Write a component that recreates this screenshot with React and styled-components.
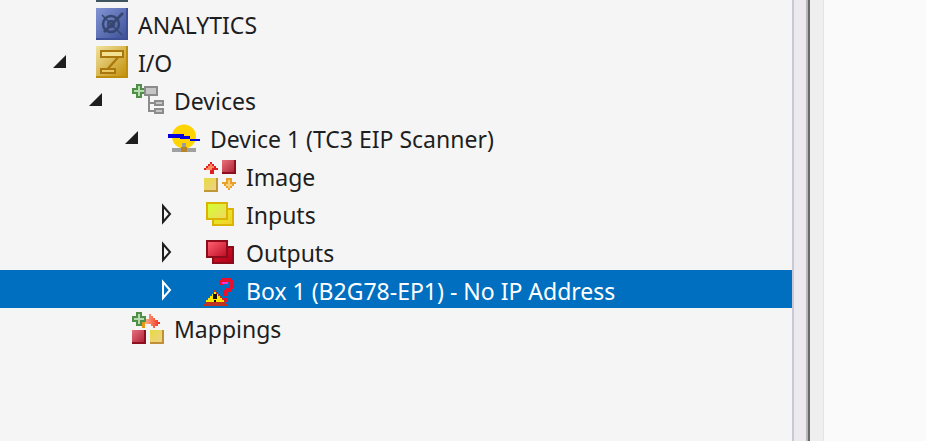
import React from "react";
import styled, { createGlobalStyle } from "styled-components";

const Global = createGlobalStyle`
  html, body { margin: 0; padding: 0; height: 100%; overflow: hidden; background: #f5f5f5; }
  #root { height: 100%; }
`;

const Page = styled.div`
  display: flex;
  width: 926px;
  height: 441px;
  overflow: hidden;
  background: #f5f5f5;
  font-family: "Noto Sans", "Open Sans", sans-serif;
`;
const TreePane = styled.div`
  width: 792px;
  flex: none;
  margin-top: -34px;
  display: flex;
  flex-direction: column;
`;
const Row = styled.div`
  display: flex;
  align-items: center;
  flex: none;
  height: 38px;
  padding-left: ${(p) => 52 + p.$level * 36}px;
  background: ${(p) => (p.$selected ? "#006fc0" : "transparent")};
  color: ${(p) => (p.$selected ? "#ffffff" : "#1e1e1e")};
`;
const ExpanderSlot = styled.div`
  width: 44px;
  height: 38px;
  flex: none;
  display: flex;
  color: ${(p) => (p.$selected ? "#ffffff" : "#1e1e1e")};
`;
const IconSvg = styled.svg`
  width: 32px;
  height: 32px;
  margin-top: 2px;
  flex: none;
  shape-rendering: crispEdges;
  display: block;
`;
const Label = styled.span`
  margin-left: 10px;
  padding-top: 4px;
  font-size: 23px;
  line-height: 34px;
  white-space: nowrap;
`;
const ScrollEdge = styled.div`
  width: 2px;
  flex: none;
  background: #c9c9d8;
`;
const ScrollTrack = styled.div`
  width: 12px;
  flex: none;
  background: #ece9ef;
`;
const Splitter = styled.div`
  width: 4px;
  flex: none;
  background: linear-gradient(90deg, #b8b8b8 0 50%, #6a6a6a 50% 100%);
`;
const Gutter = styled.div`
  width: 13px;
  flex: none;
  background: #efefef;
  border-right: 1px solid #e4e4e4;
`;
const Content = styled.div`
  flex: 1;
  background: #fafafa;
`;

const Filled = () => (
  <svg width="44" height="38" style={{ display: "block" }}>
    <polygon points="1,26 14,26 14,13" fill="currentColor" />
  </svg>
);
const Open = () => (
  <svg width="44" height="38" style={{ display: "block" }}>
    <polygon points="3,12 10,20 3,28" fill="none" stroke="currentColor" strokeWidth="2" />
  </svg>
);

const Grad = ({ id, a, b, x2 = 1, y2 = 1 }) => (
  <linearGradient id={id} x1="0" y1="0" x2={x2} y2={y2}>
    <stop offset="0" stopColor={a} />
    <stop offset="1" stopColor={b} />
  </linearGradient>
);

const Square = ({ x, y, fill, edge, size = 14 }) => (
  <>
    <rect x={x} y={y} width={size} height={size} fill={edge} />
    <rect x={x} y={y} width={size - 2} height={size - 2} fill={fill} />
  </>
);

const Defs = () => (
  <svg width="0" height="0" style={{ position: "absolute" }}>
    <defs>
      <Grad id="blue" a="#8395d4" b="#3c5198" />
      <Grad id="gold" a="#f0e2a0" b="#c4920c" />
      <Grad id="redS" a="#e8707c" b="#b0273a" />
      <Grad id="yelS" a="#e6dc40" b="#efd088" />
      <Grad id="yelF" a="#d4ff30" b="#f0d860" />
      <Grad id="redF" a="#ff5f70" b="#c01028" />
      <Grad id="redB" a="#d81830" b="#b00018" />
      <Grad id="yelB" a="#e4f020" b="#f0d030" />
      <Grad id="arrow" a="#ffb088" b="#f03020" y2={0} />
    </defs>
  </svg>
);

const Analytics = () => (
  <IconSvg viewBox="0 0 32 32">
    <rect width="32" height="32" fill="#3c4f96" />
    <rect width="30" height="30" fill="url(#blue)" />
    <g shapeRendering="auto" fill="none" stroke="#36466f">
      <circle cx="15" cy="16" r="8" strokeWidth="2.4" />
      <circle cx="15" cy="16" r="3" strokeWidth="2" />
      <path d="M6 7 L26 27" strokeWidth="1.6" />
      <path d="M27 5 L8 24" strokeWidth="2.6" />
    </g>
  </IconSvg>
);

const IO = () => (
  <IconSvg viewBox="0 0 32 32">
    <rect width="32" height="32" fill="#bd8d0c" />
    <rect width="30" height="30" fill="url(#gold)" />
    <rect x="4" y="4" width="24" height="8" fill="#a9770e" />
    <rect x="6" y="6" width="20" height="4" fill="#f1e190" />
    <rect x="4" y="22" width="16" height="6" fill="#a9770e" />
    <rect x="6" y="24" width="12" height="2" fill="#e8c860" />
    <path d="M20 12 L23 12 L14 22 L11 22 Z" fill="#a9770e" shapeRendering="auto" />
  </IconSvg>
);

const GreenPlus = ({ x = 0, y = 0 }) => (
  <g transform={`translate(${x} ${y})`}>
    <path d="M4 0h6v4h4v6h-4v4H4v-4H0V4h4z" fill="#4f8f48" />
    <path d="M6 2h2v4h4v2H8v4H6V8H2V6h4z" fill="#b4dcae" />
  </g>
);

const Devices = () => (
  <IconSvg viewBox="0 0 32 32">
    <GreenPlus />
    <rect x="12" y="2" width="14" height="10" fill="#8c8c8c" />
    <rect x="14" y="4" width="10" height="6" fill="#c6c6c6" />
    <rect x="16" y="12" width="2" height="16" fill="#8c8c8c" />
    <rect x="16" y="18" width="6" height="2" fill="#8c8c8c" />
    <rect x="16" y="26" width="6" height="2" fill="#8c8c8c" />
    <rect x="22" y="16" width="10" height="6" fill="#8c8c8c" />
    <rect x="24" y="18" width="6" height="2" fill="#c6c6c6" />
    <rect x="22" y="24" width="10" height="6" fill="#8c8c8c" />
    <rect x="24" y="26" width="6" height="2" fill="#c6c6c6" />
  </IconSvg>
);

const Device = () => (
  <IconSvg viewBox="0 0 32 32">
    <circle cx="16" cy="14.5" r="12" fill="#ffd400" shapeRendering="auto" />
    <rect x="14" y="21" width="4" height="5" fill="#9c9c9c" />
    <rect x="4" y="26" width="24" height="4" fill="#a0a0a0" />
    <rect x="13" y="25" width="6" height="5" fill="#b88428" />
    <rect x="0" y="12" width="16" height="4" fill="#0000e0" />
    <rect x="12" y="14" width="10" height="3" fill="#0000e0" />
    <rect x="22" y="17" width="10" height="2" fill="#0000e0" />
  </IconSvg>
);

const ImageIcon = () => (
  <IconSvg viewBox="0 0 32 32">
    <path d="M6 2h2v2h2v2h2v2h2v2H10v4H6v-4H0V8h2V6h2V4h2z" fill="#e02020" />
    <path d="M6 4h2v2h2v2H4V6h2zM2 8h6v2H2z" fill="#ff8a60" />
    <Square x={18} y={0} edge="#8c1020" fill="url(#redS)" />
    <Square x={0} y={18} edge="#c09838" fill="url(#yelS)" />
    <path d="M22 18h6v4h4v2h-2v2h-2v2h-2v2h-2v-2h-2v-2h-2v-2h-2v-2h4z" fill="#e8a028" />
    <path d="M24 20h2v4h2v2h-2v2h-2v-2h-2v-2h2z" fill="#f8d078" />
  </IconSvg>
);

const Stack = ({ edge, back, front }) => (
  <IconSvg viewBox="0 0 32 32">
    <rect x="8" y="10" width="22" height="18" fill={edge} />
    <rect x="10" y="12" width="18" height="14" fill={back} />
    <rect x="2" y="4" width="22" height="18" fill={edge} />
    <rect x="4" y="6" width="18" height="14" fill={front} />
  </IconSvg>
);

const Warn = () => (
  <IconSvg viewBox="0 0 32 32">
    <g fill="#e8102c">
      <rect x="17" y="4" width="10" height="2" />
      <rect x="15" y="6" width="14" height="2" />
      <rect x="15" y="8" width="4" height="3" />
      <rect x="26" y="7" width="4" height="8" />
      <rect x="22" y="14" width="5" height="4" />
      <rect x="19" y="16" width="4" height="6" />
      <rect x="19" y="24" width="4" height="4" />
    </g>
    <rect x="18" y="8" width="6" height="2" fill="#ff30d0" />
    <path d="M10 16h2v2h2v2h2v2h2v2h2v2h2v4h2v2H0v-2h2v-4h2v-2h2v-2h2v-2h2z" fill="#c03020" />
    <path d="M10 18h2v2h2v2h2v2h2v2h2v2H2v-2h2v-2h2v-2h2v-2h2z" fill="#ffe800" />
    <rect x="9" y="20" width="4" height="5" fill="#101010" />
    <rect x="10" y="26" width="2" height="2" fill="#101010" />
  </IconSvg>
);

const Mappings = () => (
  <IconSvg viewBox="0 0 32 32">
    <rect x="10" y="9" width="3" height="7" fill="#e89818" />
    <path d="M13 7h4V2h2v2h2v2h2v2h3v2h2v2h-2v2h-3v2h-2v-2h-2v-2h-6z" fill="url(#arrow)" />
    <GreenPlus />
    <Square x={0} y={18} edge="#8c1020" fill="url(#redS)" />
    <Square x={18} y={18} edge="#c09038" fill="url(#yelS)" />
  </IconSvg>
);

const rows = [
  { level: 0, icon: <IconSvg viewBox="0 0 32 32"><rect y="26" width="32" height="6" fill="#3f5660" /></IconSvg> },
  { level: 0, icon: <Analytics />, label: "ANALYTICS" },
  { level: 0, icon: <IO />, label: "I/O", exp: "filled" },
  { level: 1, icon: <Devices />, label: "Devices", exp: "filled" },
  { level: 2, icon: <Device />, label: "Device 1 (TC3 EIP Scanner)", exp: "filled" },
  { level: 3, icon: <ImageIcon />, label: "Image" },
  { level: 3, icon: <Stack edge="#dcb400" back="url(#yelB)" front="url(#yelF)" />, label: "Inputs", exp: "open" },
  { level: 3, icon: <Stack edge="#8c0c1c" back="url(#redB)" front="url(#redF)" />, label: "Outputs", exp: "open" },
  { level: 3, icon: <Warn />, label: "Box 1 (B2G78-EP1) - No IP Address", exp: "open", selected: true },
  { level: 1, icon: <Mappings />, label: "Mappings" },
];

export default function App() {
  return (
    <Page>
      <Global />
      <Defs />
      <TreePane>
        {rows.map((r, i) => (
          <Row key={i} $level={r.level} $selected={r.selected}>
            <ExpanderSlot $selected={r.selected}>
              {r.exp === "filled" && <Filled />}
              {r.exp === "open" && <Open />}
            </ExpanderSlot>
            {r.icon}
            {r.label && <Label>{r.label}</Label>}
          </Row>
        ))}
      </TreePane>
      <ScrollEdge />
      <ScrollTrack />
      <Splitter />
      <Gutter />
      <Content />
    </Page>
  );
}
